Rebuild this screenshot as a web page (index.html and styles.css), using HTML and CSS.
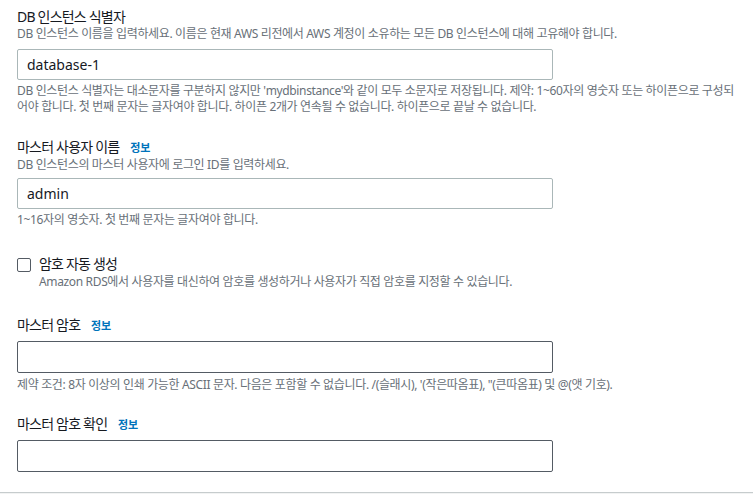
FILE: index.html
```html
<!DOCTYPE html>
<html lang="ko">
<head>
<meta charset="utf-8">
<link rel="stylesheet" href="styles.css">
</head>
<body>
<div class="panel">
  <div class="field f-id">
    <div class="label">DB 인스턴스 식별자</div>
    <div class="desc">DB 인스턴스 이름을 입력하세요. 이름은 현재 AWS 리전에서 AWS 계정이 소유하는 모든 DB 인스턴스에 대해 고유해야 합니다.</div>
    <div class="input">database-1</div>
    <div class="hint">DB 인스턴스 식별자는 대소문자를 구분하지 않지만 'mydbinstance'와 같이 모두 소문자로 저장됩니다. 제약: 1~60자의 영숫자 또는 하이픈으로 구성되어야 합니다. 첫 번째 문자는 글자여야 합니다. 하이픈 2개가 연속될 수 없습니다. 하이픈으로 끝날 수 없습니다.</div>
  </div>

  <div class="field f-user">
    <div class="label">마스터 사용자 이름 <a class="info">정보</a></div>
    <div class="desc">DB 인스턴스의 마스터 사용자에 로그인 ID를 입력하세요.</div>
    <div class="input i-user">admin</div>
    <div class="hint">1~16자의 영숫자. 첫 번째 문자는 글자여야 합니다.</div>
  </div>

  <div class="field f-check">
    <div class="check-row">
      <span class="checkbox"></span>
      <div class="check-text">
        <div class="label">암호 자동 생성</div>
        <div class="desc">Amazon RDS에서 사용자를 대신하여 암호를 생성하거나 사용자가 직접 암호를 지정할 수 있습니다.</div>
      </div>
    </div>
  </div>

  <div class="field f-pw">
    <div class="label">마스터 암호 <a class="info">정보</a></div>
    <div class="input dark"></div>
    <div class="hint h-pw">제약 조건: 8자 이상의 인쇄 가능한 ASCII 문자. 다음은 포함할 수 없습니다. /(슬래시), '(작은따옴표), "(큰따옴표) 및 @(앳 기호).</div>
  </div>

  <div class="field f-pw2">
    <div class="label">마스터 암호 확인 <a class="info">정보</a></div>
    <div class="input dark"></div>
  </div>
</div>
</body>
</html>
```

FILE: styles.css
```css
html, body {
  margin: 0;
  padding: 0;
  background: #f2f3f3;
}

body {
  font-family: "Noto Sans", "Noto Sans CJK KR", sans-serif;
  color: #16191f;
  width: 753px;
  height: 494px;
  overflow: hidden;
}

.panel {
  background: #ffffff;
  border-bottom: 1px solid #c6cccd;
  padding: 8px 0 20px 17px;
  display: flex;
  flex-direction: column;
}

.field {
  display: flex;
  flex-direction: column;
  width: 717px;
}

.label {
  font-size: 14px;
  line-height: 18px;
  letter-spacing: -0.8px;
  color: #16191f;
}

.info {
  font-size: 11px;
  font-weight: 700;
  letter-spacing: -0.1px;
  color: #0073bb;
  margin-left: 8px;
}

.desc, .hint {
  font-size: 12px;
  line-height: 16px;
  letter-spacing: -0.35px;
  color: #687078;
}

.hint {
  margin-top: 3px;
}

.input {
  box-sizing: border-box;
  width: 536px;
  height: 31px;
  border: 1px solid #aab7b8;
  border-radius: 2px;
  padding: 0 9px;
  font-size: 14px;
  line-height: 29px;
  color: #16191f;
  margin-top: 7px;
}

.input.i-user {
  margin-top: 5px;
}

.input.dark {
  height: 32px;
  border-color: #545b64;
  margin-top: 6px;
}

.hint.h-pw {
  margin-top: 4px;
}

.f-user { margin-top: 23px; }
.f-check { margin-top: 27px; }
.f-pw { margin-top: 26px; }
.f-pw2 { margin-top: 22px; }

.check-row {
  display: flex;
  align-items: flex-start;
  gap: 8px;
}

.checkbox {
  box-sizing: border-box;
  width: 14px;
  height: 14px;
  border: 1px solid #545b64;
  border-radius: 2px;
  margin-top: 3px;
  flex: none;
}

.check-text {
  display: flex;
  flex-direction: column;
}

.check-text .desc {
  margin-top: 1px;
}
```
